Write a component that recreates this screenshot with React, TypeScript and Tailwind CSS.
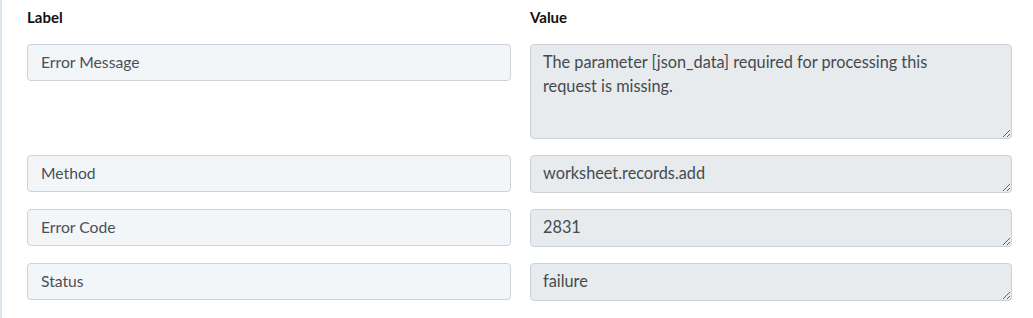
import React from "react";

const rows = [
  { label: "Error Message", value: "The parameter [json_data] required for processing this request is missing.", tall: true },
  { label: "Method", value: "worksheet.records.add" },
  { label: "Error Code", value: "2831" },
  { label: "Status", value: "failure" },
];

export default function App() {
  return (
    <div className="w-[1033px] h-[318px] bg-white border-l-2 border-[#dde5ef] pl-[25px] pr-[22px] pt-[6px]">
      <div className="grid grid-cols-[484px_482px] gap-x-[19px] gap-y-[16px] items-start">
        <div className="font-['Lato',sans-serif] font-bold text-[15px] text-[#111] h-[22px] leading-[22px]">Label</div>
        <div className="font-['Lato',sans-serif] font-bold text-[15px] text-[#111] h-[22px] leading-[22px]">Value</div>
        {rows.map((r) => (
          <React.Fragment key={r.label}>
            <input
              readOnly
              value={r.label}
              className="h-[37px] w-full rounded-[4px] border border-[#ccd2da] bg-[#f3f6f9] px-[13px] pb-[2px] font-['Lato',sans-serif] text-[15.7px] text-[#4a4f57] outline-none"
            />
            <textarea
              readOnly
              value={r.value}
              className={`${r.tall ? "h-[95px]" : "h-[38px]"} w-full rounded-[4px] border border-[#ccd1d7] bg-[#e8ebee] pl-[12px] pr-[40px] py-[5px] font-['Lato',sans-serif] text-[16.3px] leading-[24px] text-[#454a50] outline-none block`}
            />
          </React.Fragment>
        ))}
      </div>
    </div>
  );
}
